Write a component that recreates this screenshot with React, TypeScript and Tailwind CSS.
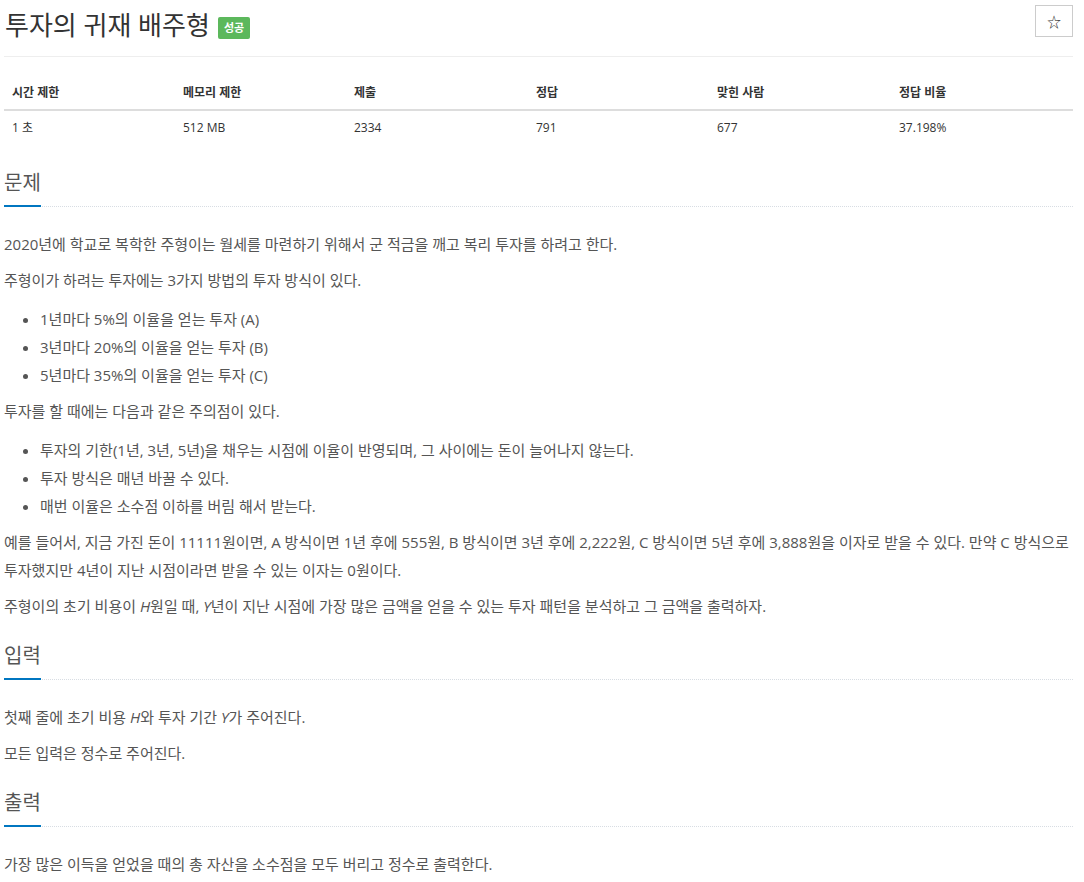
import React from 'react';

const font = { fontFamily: '"Open Sans", "Noto Sans CJK KR", sans-serif' };

const stats = [
  { label: '시간 제한', value: '1 초', w: 'w-[171px]' },
  { label: '메모리 제한', value: '512 MB', w: 'w-[171px]' },
  { label: '제출', value: '2334', w: 'w-[182px]' },
  { label: '정답', value: '791', w: 'w-[181px]' },
  { label: '맞힌 사람', value: '677', w: 'w-[182px]' },
  { label: '정답 비율', value: '37.198%', w: 'w-[182px]' },
];

// Section heading with blue underline + dotted rule
function SectionHeader({ title }: { title: string }) {
  return (
    <div className="border-b border-dotted border-[#d8dde3]">
      <h2 className="inline-block text-[20px] leading-[22px] text-[#555] font-normal pb-[11px] border-solid border-b-2 border-b-[#0076c0] -mb-px">
        {title}
      </h2>
    </div>
  );
}

function P({ children }: { children: React.ReactNode }) {
  return <p className="mb-[8px]">{children}</p>;
}

function Bullets({ items }: { items: React.ReactNode[] }) {
  return (
    <ul className="list-disc pl-[36px] mt-[11px] mb-[8px] marker:text-[#555]">
      {items.map((it, i) => (
        <li key={i}>{it}</li>
      ))}
    </ul>
  );
}

export default function App() {
  return (
    <div className="bg-white min-h-screen pl-[4px] pr-[11px] text-[#555]" style={font}>
      {/* Title */}
      <div className="flex items-start justify-between pt-[5px] pb-[11px] border-b border-[#eee]">
        <div className="flex items-center gap-[8px] pl-px">
          <h1 className="text-[26px] leading-[40px] text-[#333] font-normal">투자의 귀재 배주형</h1>
          <span className="mt-[6px] bg-[#5cb85c] text-white text-[11px] font-bold leading-[22px] px-[6px] rounded-[2px]">
            성공
          </span>
        </div>
        <button className="w-[38px] h-[32px] border border-[#ccc] bg-white flex items-center justify-center text-[14px] text-[#333]">
          ☆
        </button>
      </div>

      {/* Problem info */}
      <table className="w-full mt-[10px] text-[12px] text-[#333] border-collapse">
        <thead>
          <tr className="border-b-2 border-[#ddd]">
            {stats.map((s) => (
              <th key={s.label} className={`${s.w} text-left font-bold pl-[8px] pt-[16px] pb-[6px] leading-[20px]`}>
                {s.label}
              </th>
            ))}
          </tr>
        </thead>
        <tbody>
          <tr>
            {stats.map((s) => (
              <td key={s.label} className="pl-[8px] pt-[8px] pb-[8px] leading-[17px]">
                {s.value}
              </td>
            ))}
          </tr>
        </tbody>
      </table>

      {/* 문제 */}
      <section className="mt-[28px]">
        <SectionHeader title="문제" />
        <div className="mt-[23px] text-[15px] leading-[28px]">
          <P>2020년에 학교로 복학한 주형이는 월세를 마련하기 위해서 군 적금을 깨고 복리 투자를 하려고 한다.</P>
          <P>주형이가 하려는 투자에는 3가지 방법의 투자 방식이 있다.</P>
          <Bullets
            items={[
              '1년마다 5%의 이율을 얻는 투자 (A)',
              '3년마다 20%의 이율을 얻는 투자 (B)',
              '5년마다 35%의 이율을 얻는 투자 (C)',
            ]}
          />
          <P>투자를 할 때에는 다음과 같은 주의점이 있다.</P>
          <Bullets
            items={[
              '투자의 기한(1년, 3년, 5년)을 채우는 시점에 이율이 반영되며, 그 사이에는 돈이 늘어나지 않는다.',
              '투자 방식은 매년 바꿀 수 있다.',
              '매번 이율은 소수점 이하를 버림 해서 받는다.',
            ]}
          />
          <P>
            예를 들어서, 지금 가진 돈이 11111원이면, A 방식이면 1년 후에 555원, B 방식이면 3년 후에 2,222원, C 방식이면 5년 후에 3,888원을 이자로 받을 수 있다. 만약 C 방식으로 투자했지만 4년이 지난 시점이라면 받을 수 있는 이자는 0원이다.
          </P>
          <P>
            주형이의 초기 비용이 <i>H</i>원일 때, <i>Y</i>년이 지난 시점에 가장 많은 금액을 얻을 수 있는 투자 패턴을 분석하고 그 금액을 출력하자.
          </P>
        </div>
      </section>

      {/* 입력 */}
      <section className="mt-[25px]">
        <SectionHeader title="입력" />
        <div className="mt-[23px] text-[15px] leading-[28px]">
          <P>
            첫째 줄에 초기 비용 <i>H</i>와 투자 기간 <i>Y</i>가 주어진다.
          </P>
          <P>모든 입력은 정수로 주어진다.</P>
        </div>
      </section>

      {/* 출력 */}
      <section className="mt-[25px]">
        <SectionHeader title="출력" />
        <div className="mt-[23px] text-[15px] leading-[28px]">
          <P>가장 많은 이득을 얻었을 때의 총 자산을 소수점을 모두 버리고 정수로 출력한다.</P>
        </div>
      </section>
    </div>
  );
}
